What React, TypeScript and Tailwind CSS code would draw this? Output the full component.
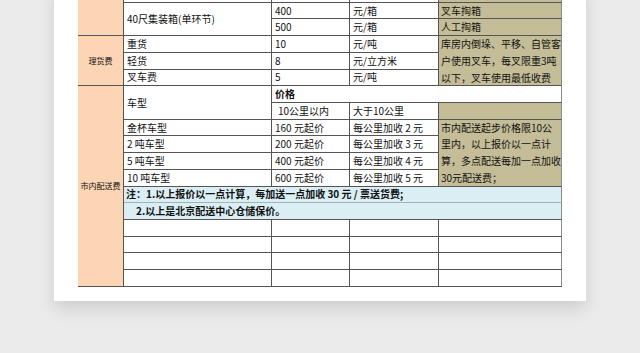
import React from 'react';

const line = 'border-r border-b border-[#555555]';
const cell = `${line} flex items-center pl-[3px] whitespace-nowrap overflow-hidden`;
const side = `${line} bg-[#fcd5b4] flex items-center justify-center text-[8px]`;
const tan = `${line} border-r-[#8a8a8a] bg-[#c4bd97] pl-[2px] whitespace-nowrap overflow-hidden`;
const last = `${cell} border-r-[#8a8a8a]`;
const note = `${line} border-r-[#8a8a8a] bg-[#daeef3] col-span-4 flex items-center font-bold whitespace-nowrap overflow-hidden`;

const trucks = [
  ['金杯车型', '160 元起价', '每公里加收 2 元'],
  ['2 吨车型', '200 元起价', '每公里加收 3 元'],
  ['5 吨车型', '400 元起价', '每公里加收 4 元'],
  ['10 吨车型', '600 元起价', '每公里加收 5 元'],
];

const goods = [
  ['重货', '10', '元/吨'],
  ['轻货', '8', '元/立方米'],
  ['叉车费', '5', '元/吨'],
];

export default function App() {
  return (
    <div
      className="h-[353px] w-[640px] overflow-hidden bg-[#ebebeb] text-[#111111]"
      style={{ fontFamily: '"Noto Sans CJK SC", "Noto Sans", sans-serif' }}
    >
      {/* Sheet */}
      <div className="mx-auto -mt-[14.02px] w-[532px] bg-white px-[24px] pb-[14px] shadow-[0_8px_16px_rgba(0,0,0,0.12)]">
        <div className="grid grid-cols-[46px_148px_78px_89px_123px] auto-rows-[16.72px] text-[10px] leading-none">
          {/* 集装箱 */}
          <div className={`${side} row-span-3`} />
          <div className={cell} />
          <div className={cell} />
          <div className={cell} />
          <div className={tan} />

          <div className={`${cell} row-span-2`}>40尺集装箱(单环节)</div>
          <div className={cell}>400</div>
          <div className={cell}>元/箱</div>
          <div className={`${tan} flex items-center`}>叉车掏箱</div>
          <div className={cell}>500</div>
          <div className={cell}>元/箱</div>
          <div className={`${tan} flex items-center`}>人工掏箱</div>

          {/* 理货费 */}
          <div className={`${side} row-span-3`}>理货费</div>
          {goods.map(([name, price, unit], i) => (
            <React.Fragment key={name}>
              <div className={cell}>{name}</div>
              <div className={cell}>{price}</div>
              <div className={cell}>{unit}</div>
              {i === 0 && (
                <div className={`${tan} row-span-3 leading-[16.72px]`}>
                  库房内倒垛、平移、自管客
                  <br />
                  户使用叉车，每叉限重3吨
                  <br />
                  以下，叉车使用最低收费
                </div>
              )}
            </React.Fragment>
          ))}

          {/* 市内配送费 */}
          <div className={`${side} row-span-12`}>市内配送费</div>
          <div className={`${cell} row-span-2`}>车型</div>
          <div className={`${last} col-span-3 font-bold`}>价格</div>
          <div className={`${cell} pl-[6px]`}>10公里以内</div>
          <div className={cell}>大于10公里</div>
          <div className={tan} />

          {trucks.map(([name, base, extra], i) => (
            <React.Fragment key={name}>
              <div className={cell}>{name}</div>
              <div className={cell}>{base}</div>
              <div className={cell}>{extra}</div>
              {i === 0 && (
                <div className={`${tan} row-span-4 leading-[16.72px]`}>
                  市内配送起步价格限10公
                  <br />
                  里内，以上报价以一点计
                  <br />
                  算，多点配送每加一点加收
                  <br />
                  30元配送费；
                </div>
              )}
            </React.Fragment>
          ))}

          <div className={`${note} border-b-[#9fb3b8] pl-[2px]`}>
            注：1.以上报价以一点计算，每加送一点加收 30 元 / 票送货费;
          </div>
          <div className={`${note} pl-[12px]`}>2.以上是北京配送中心仓储保价。</div>

          {[0, 1, 2, 3].map((r) => (
            <React.Fragment key={r}>
              <div className={cell} />
              <div className={cell} />
              <div className={cell} />
              <div className={last} />
            </React.Fragment>
          ))}
        </div>
      </div>
    </div>
  );
}
